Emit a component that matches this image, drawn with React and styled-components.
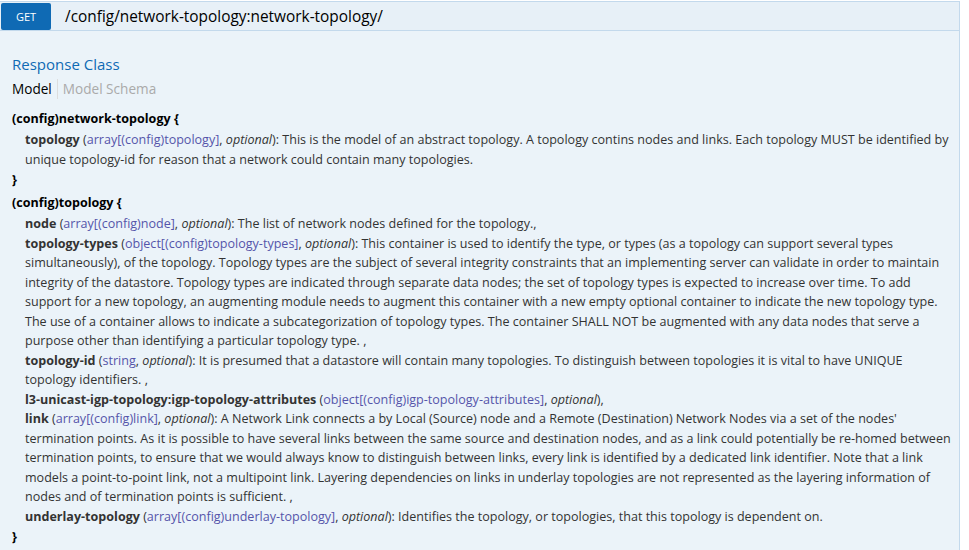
import React from "react";
import styled, { createGlobalStyle } from "styled-components";

const GlobalStyle = createGlobalStyle`
  html, body {
    margin: 0;
    padding: 0;
    background: #ffffff;
  }
  body {
    font-family: "Open Sans", "DejaVu Sans", sans-serif;
  }
`;

const Operation = styled.div`
  width: 960px;
  padding-top: 1px;
`;

const Heading = styled.div`
  display: flex;
  align-items: center;
  height: 28px;
  padding: 0 0 0 1px;
  background: #e7f0f7;
  border: 1px solid #c3d9ec;
  border-left: none;
`;

const Method = styled.span`
  display: flex;
  align-items: center;
  justify-content: center;
  width: 50px;
  height: 27px;
  background: #0f6ab4;
  border-radius: 2px;
  color: #ffffff;
  font-size: 11px;
  text-transform: uppercase;
`;

const Path = styled.span`
  margin-left: 14px;
  font-size: 15.4px;
  color: #000000;
`;

const Content = styled.div`
  background: #ebf3f9;
  border-right: 1px solid #c3d9ec;
  padding: 22px 6px 20px 12px;
  min-height: 500px;
`;

const SectionTitle = styled.h4`
  margin: 0;
  font-size: 15px;
  font-weight: normal;
  line-height: 22px;
  color: #0f6ab4;
`;

const Tabs = styled.ul`
  display: flex;
  list-style: none;
  margin: 4px 0 10px;
  padding: 0;
  font-size: 13.6px;
  line-height: 20px;
`;

const Tab = styled.li`
  color: ${(p) => (p.$active ? "#000000" : "#aaaaaa")};
  padding: 0 5px;
  border-left: ${(p) => (p.$first ? "none" : "1px solid #dddddd")};
  padding-left: ${(p) => (p.$first ? "0" : "5px")};
`;

const Signature = styled.div`
  font-size: 12.55px;
  line-height: 19.5px;
  color: #333333;
`;

const ModelBlock = styled.div`
  margin-bottom: 3px;
`;

const Strong = styled.div`
  font-weight: bold;
  color: #000000;
  line-height: 20px;
  margin: 1px 0;
`;

const Props = styled.div`
  padding-left: 13px;
`;

const Prop = styled.div``;

const PropName = styled.span`
  font-weight: bold;
  line-height: 1;
`;

const PropType = styled.span`
  color: #5555aa;
  line-height: 1;
`;

const Opt = styled.span`
  font-style: italic;
  line-height: 1;
`;

const models = [
  {
    name: "(config)network-topology",
    props: [
      {
        name: "topology",
        type: "array[(config)topology]",
        desc:
          "This is the model of an abstract topology. A topology contins nodes and links. Each topology MUST be identified by unique topology-id for reason that a network could contain many topologies.",
      },
    ],
  },
  {
    name: "(config)topology",
    props: [
      {
        name: "node",
        type: "array[(config)node]",
        desc: "The list of network nodes defined for the topology.",
      },
      {
        name: "topology-types",
        type: "object[(config)topology-types]",
        desc:
          "This container is used to identify the type, or types (as a topology can support several types simultaneously), of the topology. Topology types are the subject of several integrity constraints that an implementing server can validate in order to maintain integrity of the datastore. Topology types are indicated through separate data nodes; the set of topology types is expected to increase over time. To add support for a new topology, an augmenting module needs to augment this container with a new empty optional container to indicate the new topology type. The use of a container allows to indicate a subcategorization of topology types. The container SHALL NOT be augmented with any data nodes that serve a purpose other than identifying a particular topology type. ",
      },
      {
        name: "topology-id",
        type: "string",
        desc:
          "It is presumed that a datastore will contain many topologies. To distinguish between topologies it is vital to have UNIQUE topology identifiers. ",
      },
      {
        name: "l3-unicast-igp-topology:igp-topology-attributes",
        type: "object[(config)igp-topology-attributes]",
      },
      {
        name: "link",
        type: "array[(config)link]",
        desc:
          "A Network Link connects a by Local (Source) node and a Remote (Destination) Network Nodes via a set of the nodes' termination points. As it is possible to have several links between the same source and destination nodes, and as a link could potentially be re-homed between termination points, to ensure that we would always know to distinguish between links, every link is identified by a dedicated link identifier. Note that a link models a point-to-point link, not a multipoint link. Layering dependencies on links in underlay topologies are not represented as the layering information of nodes and of termination points is sufficient. ",
      },
      {
        name: "underlay-topology",
        type: "array[(config)underlay-topology]",
        desc:
          "Identifies the topology, or topologies, that this topology is dependent on.",
      },
    ],
  },
];

function Model({ model }) {
  const last = model.props.length - 1;
  return (
    <ModelBlock>
      <Strong>{model.name} {"{"}</Strong>
      <Props>
        {model.props.map((p, i) => (
          <Prop key={p.name}>
            <PropName>{p.name}</PropName> (<PropType>{p.type}</PropType>,{" "}
            <Opt>optional</Opt>)
            {p.desc ? `: ${p.desc}` : ""}
            {i < last ? "," : ""}
          </Prop>
        ))}
      </Props>
      <Strong>{"}"}</Strong>
    </ModelBlock>
  );
}

export default function App() {
  return (
    <>
      <GlobalStyle />
      <Operation>
        <Heading>
          <Method>get</Method>
          <Path>/config/network-topology:network-topology/</Path>
        </Heading>
        <Content>
          <SectionTitle>Response Class</SectionTitle>
          <Tabs>
            <Tab $active $first>Model</Tab>
            <Tab>Model Schema</Tab>
          </Tabs>
          <Signature>
            {models.map((m) => (
              <Model key={m.name} model={m} />
            ))}
          </Signature>
        </Content>
      </Operation>
    </>
  );
}
